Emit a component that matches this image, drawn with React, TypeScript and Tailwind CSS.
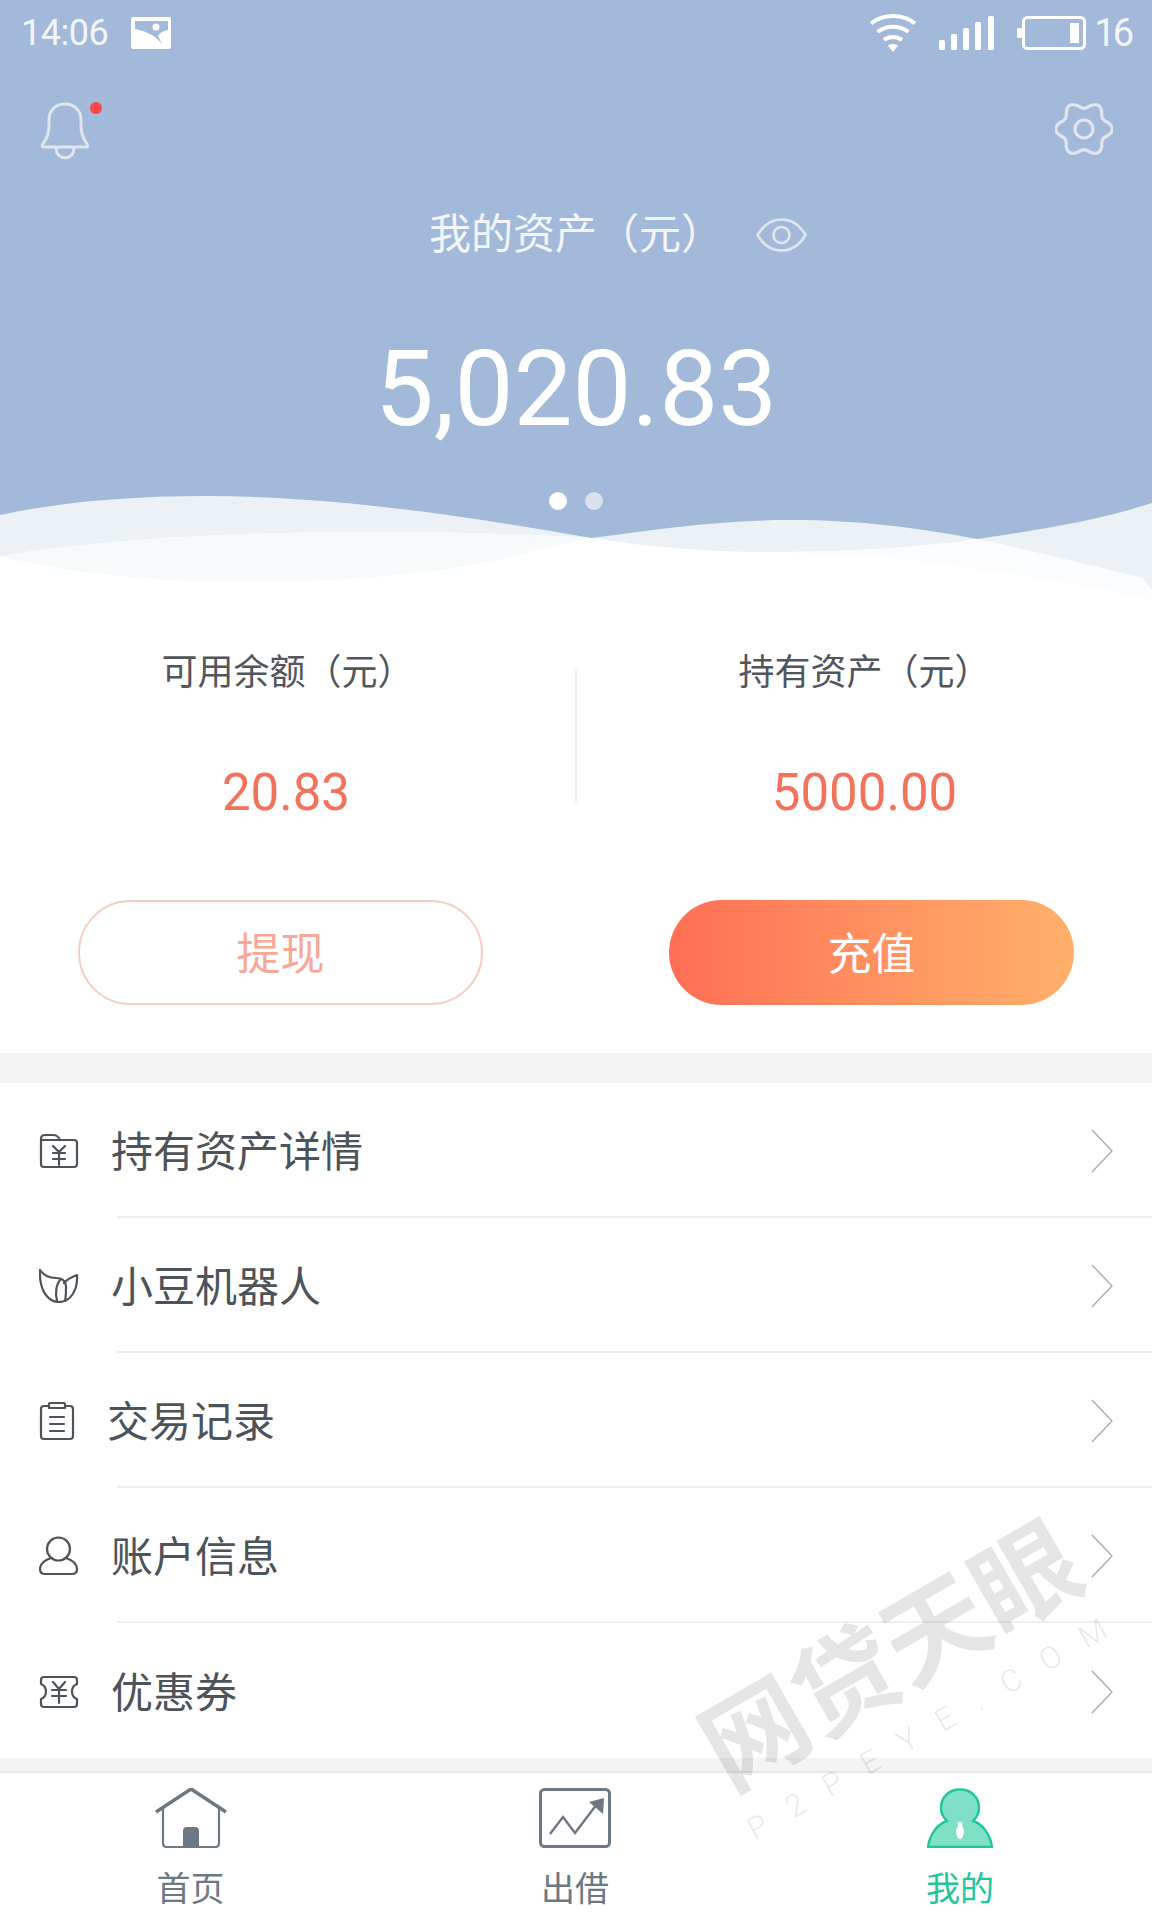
import React from "react";

const CJK = "font-['Roboto','Noto_Sans_CJK_SC',sans-serif]";

function gearPath() {
  const pts: string[] = [];
  for (let i = 0; i < 120; i++) {
    const t = (i / 120) * Math.PI * 2;
    const r = 24 + 3.3 * Math.cos(6 * t);
    pts.push(`${(29 + r * 1.04 * Math.cos(t)).toFixed(2)} ${(27 + r * Math.sin(t)).toFixed(2)}`);
  }
  return "M" + pts.join("L") + "Z";
}

function Bell() {
  return (
    <svg width="64" height="58" viewBox="0 0 64 58" fill="none" stroke="#dfe6ef" strokeWidth="3" strokeLinejoin="round">
      <path d="M3 45Q1.500 44 3 42C8 35 9 30 9 24V18C9 8 16 2 25 2C34 2 41 8 41 18V24C41 30 42 35 47 42Q48.500 44 47 45Z" />
      <path d="M16 46C16 59 34 59 34 46" />
      <circle cx="56" cy="6" r="6" fill="#f9484c" stroke="none" />
    </svg>
  );
}

function Gear() {
  return (
    <svg width="58" height="54" viewBox="0 0 58 54" fill="none" stroke="#dfe6ef" strokeWidth="3.200">
      <path d={gearPath()} />
      <circle cx="29" cy="27" r="9" />
    </svg>
  );
}

function Eye() {
  return (
    <svg width="51" height="34" viewBox="0 0 51 34" fill="none" stroke="#dfe6ef" strokeWidth="2.600">
      <path d="M1.500 17C8 6 17 1.500 25.500 1.500C34 1.500 43 6 49.500 17C43 28 34 32.500 25.500 32.500C17 32.500 8 28 1.500 17Z" />
      <circle cx="25.500" cy="17" r="8" />
    </svg>
  );
}

function PictureIcon() {
  return (
    <svg width="40" height="32" viewBox="0 0 40 32">
      <rect width="40" height="32" rx="2" fill="#ffffff" />
      <path d="M4 4H37V13Q30 14 27 19L31 27C25 19 15 14 4 12Z" fill="#a3b9d9" />
      <circle cx="25" cy="10" r="3.500" fill="#ffffff" />
    </svg>
  );
}

function Wifi() {
  return (
    <svg width="46" height="38" viewBox="0 0 46 38" fill="none" stroke="#ffffff" strokeWidth="4">
      <path d="M1 9.500C13 -0.500 33 -0.500 45 9.500" />
      <path d="M7.500 18C16 11 30 11 38.500 18" />
      <path d="M14 26C19 22 27 22 32 26" />
      <path d="M18 31.500L23 38L28 31.500C25 29.500 21 29.500 18 31.500Z" fill="#ffffff" stroke="none" />
    </svg>
  );
}

function Signal() {
  return (
    <svg width="55" height="34" viewBox="0 0 55 34" fill="#ffffff">
      <rect x="0" y="24" width="6" height="10" rx="1.500" />
      <rect x="12" y="18" width="6" height="16" rx="1.500" />
      <rect x="24" y="12" width="6" height="22" rx="1.500" />
      <rect x="36" y="6" width="6" height="28" rx="1.500" />
      <rect x="49" y="0" width="6" height="34" rx="1.500" />
    </svg>
  );
}

function Battery() {
  return (
    <svg width="69" height="34" viewBox="0 0 69 34" fill="none">
      <rect x="6.500" y="1.500" width="61" height="31" rx="4" stroke="#ffffff" strokeWidth="3" />
      <rect x="0" y="12" width="5" height="10" rx="1.500" fill="#ffffff" />
      <rect x="53" y="7" width="9" height="20" fill="#ffffff" />
    </svg>
  );
}

function Waves() {
  return (
    <svg className="absolute left-0 top-[490px] block" width="1152" height="110" viewBox="0 490 1152 110">
      <path d="M0 515C60 502 130 496 206 496C330 496 460 515 591 538C660 529 720 520 790 520C860 520 920 528 977 539C1040 530 1100 520 1152 503V600H0Z" fill="#ecf1f6" />
      <path d="M0 556C110 538 240 532 367 532C450 532 530 534 591 538C655 548 710 552 771 552C840 552 920 548 977 539C1050 555 1110 570 1142 578L1152 590V600H0Z" fill="#ffffff" />
      <path d="M771 552C840 552 920 548 977 539C1050 555 1110 570 1142 578L1152 590V600C1090 585 1000 572 930 562C880 556 820 553 771 552Z" fill="#fbfcfd" />
      <path d="M0 556C110 538 240 532 367 532C450 532 530 534 591 538C560 545 535 550 507 558C430 575 340 582 242 582C150 582 60 572 0 556Z" fill="#f7fafb" />
    </svg>
  );
}

const S = { fill: "none", stroke: "#4c5359", strokeWidth: 2.2, strokeLinejoin: "round" as const, strokeLinecap: "round" as const };

function FolderIcon() {
  return (
    <svg width="40" height="36" viewBox="0 0 40 36" {...S}>
      <path d="M2 9V6Q2 2 6 2H14Q19 2 21 7" />
      <path d="M2 8V31Q2 34 5 34H35Q38 34 38 31V10Q38 7 35 7H2" />
      <path d="M14 13L20 19L26 13M14 20H26M14 26H26M20 19V32" />
    </svg>
  );
}
function LeafIcon() {
  return (
    <svg width="40" height="34" viewBox="0 0 40 34" {...S}>
      <path d="M1 1C0 20 8 33 20 33C31 33 39 22 38 6C33 8 28 10 25 14" />
      <path d="M1 1C5 7 12 9 17 9C22 9 27 11 27 18C27 24 27 28 26 32" />
      <path d="M22 10C17 15 16 24 18 32" />
    </svg>
  );
}
function ClipboardIcon() {
  return (
    <svg width="36" height="40" viewBox="0 0 36 40" {...S}>
      <path d="M10 5H5Q2 5 2 8V35Q2 38 5 38H31Q34 38 34 35V8Q34 5 31 5H26" />
      <path d="M10 7V3Q10 2 11 2H25Q26 2 26 3V7Z" />
      <path d="M11 16H25M11 23H25M11 30H25" />
    </svg>
  );
}
function PersonIcon() {
  return (
    <svg width="40" height="40" viewBox="0 0 40 40" {...S}>
      <circle cx="19.500" cy="13" r="11.500" />
      <path d="M12 22C6 24 1 27 1 33Q1 38 6 38H33Q38 38 38 33C38 27 33 24 27 22" />
    </svg>
  );
}
function CouponIcon() {
  return (
    <svg width="40" height="34" viewBox="0 0 40 34" {...S}>
      <path d="M5 2H35Q38 2 38 5V9Q33 11 33 16.500Q33 22 38 24V29Q38 32 35 32H5Q2 32 2 29V24Q7 22 7 16.500Q7 11 2 9V5Q2 2 5 2Z" />
      <path d="M14 7L20 14L26 7M13 15H27M13 21H27M20 14V28" />
    </svg>
  );
}

function Chevron() {
  return (
    <svg width="22" height="44" viewBox="0 0 22 44" fill="none" stroke="#a9a9a9" strokeWidth="1.300">
      <path d="M1 1L21 22L1 43" />
    </svg>
  );
}

function HomeIcon() {
  return (
    <svg width="72" height="60" viewBox="0 0 72 60" fill="none" stroke="#6d7885">
      <path d="M1 24L36 1L71 24" strokeWidth="3.500" />
      <path d="M8 20V55Q8 59 12 59H60Q64 59 64 55V20" strokeWidth="2.200" />
      <path d="M28 60V43Q28 39 32 39H40Q44 39 44 43V60Z" fill="#6d7885" stroke="none" />
    </svg>
  );
}
function ChartIcon() {
  return (
    <svg width="72" height="60" viewBox="0 0 72 60" fill="none" stroke="#6d7885">
      <rect x="1.500" y="1.500" width="69" height="57" rx="4" strokeWidth="3" />
      <path d="M11 46L24 29L36 45L58 16" strokeWidth="2.400" />
      <path d="M50 14L65 10L64 26Z" fill="#6d7885" stroke="none" />
    </svg>
  );
}
function MineIcon() {
  return (
    <svg width="66" height="60" viewBox="0 0 66 60">
      <path d="M33 1.500C44 1.500 52 9 52 20C52 26 49 30 46 33C55 36 63 45 65 59H1C3 45 11 36 20 33C17 30 14 26 14 20C14 9 22 1.500 33 1.500Z" fill="#80e0c5" stroke="#1cc79b" strokeWidth="2.400" />
      <circle cx="33" cy="36" r="2.500" fill="#ffffff" />
      <ellipse cx="33" cy="44" rx="3.800" ry="7" fill="#ffffff" />
    </svg>
  );
}

const rows = [
  { label: "持有资产详情", icon: <FolderIcon />, cls: "ml-[32px]" },
  { label: "小豆机器人", icon: <LeafIcon />, cls: "ml-[32px]" },
  { label: "交易记录", icon: <ClipboardIcon />, cls: "ml-[28px]" },
  { label: "账户信息", icon: <PersonIcon />, cls: "ml-[32px]" },
  { label: "优惠券", icon: <CouponIcon />, cls: "ml-[32px]" },
];

export default function App() {
  return (
    <div className={`relative w-[1152px] h-[1920px] overflow-hidden bg-white ${CJK}`}>
      <header className="relative h-[600px] bg-[#a3b9d9]">
        <div className="flex h-[66px] items-center justify-between pl-[21px] pr-[21px] text-[#f2f5f9]">
          <div className="flex items-center gap-[23px]">
            <span className="w-[87px] text-[36px] tracking-[-0.5px] leading-none">14:06</span>
            <PictureIcon />
          </div>
          <div className="flex items-center">
            <Wifi />
            <span className="ml-[23px]"><Signal /></span>
            <span className="ml-[23px]"><Battery /></span>
            <span className="ml-[8px] text-[38px] tracking-[-3px] leading-none">16</span>
          </div>
        </div>
        <div className="mt-[36px] flex h-[58px] items-start justify-between pl-[40px] pr-[39px]">
          <Bell />
          <Gear />
        </div>
        <div className="mt-[48px] flex h-[50px] items-center pl-[429px]">
          <span className="w-[294px] pt-[4px] text-[42px] leading-[50px] text-[#f2f5f9]">我的资产（元）</span>
          <span className="ml-[33px] mt-[4px] flex"><Eye /></span>
        </div>
        <div className="mt-[77px] h-[110px] text-center text-[105px] leading-[110px] text-white">5,020.83</div>
        <div className="relative z-10 mt-[47px] flex justify-center gap-[18px]">
          <span className="h-[18px] w-[18px] rounded-full bg-white" />
          <span className="h-[18px] w-[18px] rounded-full bg-[#d8e1ec]" />
        </div>
        <Waves />
      </header>

      <section className="relative pt-[50px] pb-[48px]">
        <div className="flex h-[171px]">
          <div className="w-[575px] text-center">
            <div className="h-[44px] pt-[1px] text-[36px] leading-[44px] text-[#50565c]">可用余额（元）</div>
            <div className="mt-[69px] pr-[3px] text-[51px] leading-[60px] text-[#f2725c]">20.83</div>
          </div>
          <div className="mt-[20px] h-[132px] w-[2px] bg-[#eeeeee]" />
          <div className="flex-1 text-center">
            <div className="h-[44px] pt-[1px] text-[36px] leading-[44px] text-[#50565c]">持有资产（元）</div>
            <div className="mt-[69px] text-[51px] leading-[60px] text-[#f2725c]">5000.00</div>
          </div>
        </div>
        <div className="mt-[79px] flex justify-between pl-[78px] pr-[78px]">
          <button className="h-[105px] w-[405px] rounded-full border-2 border-[#f6cdc2] bg-white pt-[4px] text-[44px] text-[#f8a896]">提现</button>
          <button className="h-[105px] w-[405px] rounded-full bg-gradient-to-r from-[#ff6e55] to-[#ffb06b] pt-[4px] text-[44px] text-white">充值</button>
        </div>
      </section>

      <div className="h-[30px] bg-[#f4f4f4]" />

      <div>
        {rows.map((r, i) => (
          <div key={r.label} className="flex h-[135px] flex-col">
            <div className="flex flex-1 items-center pt-[3px] pl-[39px] pr-[39px]">
              <span className="flex w-[40px]">{r.icon}</span>
              <span className={`${r.cls} flex-1 pt-[4px] text-[42px] leading-[50px] text-[#4c5359]`}>{r.label}</span>
              <Chevron />
            </div>
            {i < rows.length - 1 && <div className="ml-[117px] h-[2px] bg-[#eeeeee]" />}
          </div>
        ))}
      </div>

      <div className="h-[13px] bg-[#f4f4f4]" />
      <div className="h-[2px] bg-[#e8e8e8]" />

      <nav className="grid grid-cols-3 pt-[15px]">
        <div className="flex flex-col items-center pr-[3px]">
          <HomeIcon />
          <span className="mt-[21px] h-[40px] text-[34px] leading-[40px] text-[#6d7885]">首页</span>
        </div>
        <div className="flex flex-col items-center pr-[2px]">
          <ChartIcon />
          <span className="mt-[21px] h-[40px] text-[34px] leading-[40px] text-[#6d7885]">出借</span>
        </div>
        <div className="flex flex-col items-center">
          <MineIcon />
          <span className="mt-[21px] h-[40px] text-[34px] leading-[40px] text-[#1fc79c]">我的</span>
        </div>
      </nav>

      <div className="pointer-events-none absolute left-[892px] top-[1658px] -translate-x-1/2 -translate-y-1/2 -rotate-[30deg] whitespace-nowrap text-[104px] leading-none font-bold text-black/10">
        网贷天眼
      </div>
      <div className="pointer-events-none absolute left-[938px] top-[1723px] -translate-x-1/2 -translate-y-1/2 -rotate-[30deg] whitespace-nowrap text-[31px] leading-none font-light tracking-[25px] text-black/10">
        P2PEYE.COM
      </div>
    </div>
  );
}
